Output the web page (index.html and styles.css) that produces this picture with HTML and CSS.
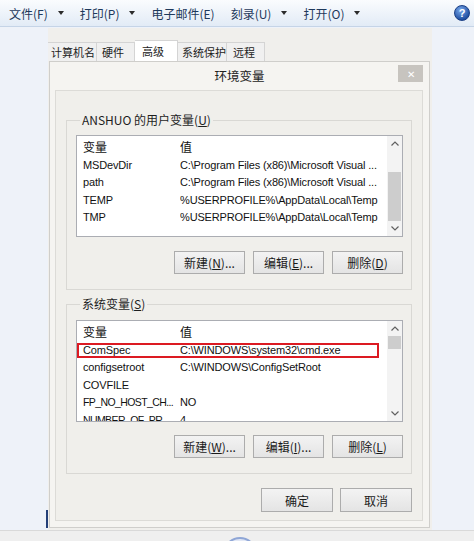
FILE: index.html
```html
<!DOCTYPE html>
<html lang="zh-CN">
<head>
<meta charset="utf-8">
<title>环境变量</title>
<link rel="stylesheet" href="styles.css">
</head>
<body>
<div class="toolbar">
  <div class="menu">
    <span class="mi">文件(F)<i class="dd"></i></span>
    <span class="mi">打印(P)<i class="dd"></i></span>
    <span class="mi">电子邮件(E)</span>
    <span class="mi">刻录(U)<i class="dd"></i></span>
    <span class="mi">打开(O)<i class="dd"></i></span>
  </div>
  <span class="help">?</span>
</div>
<div class="stage">
  <div class="side"><div class="edge"></div></div>
  <div class="window">
    <div class="tabs">
      <span class="tab t1">计算机名</span>
      <span class="tab t2">硬件</span>
      <span class="tab t3 on">高级</span>
      <span class="tab t4">系统保护</span>
      <span class="tab t5">远程</span>
    </div>
    <div class="dialog">
      <div class="titlebar"><span></span><span class="title">环境变量</span><span class="close">✕</span></div>
      <div class="content">
        <fieldset class="group g-user">
          <legend>ANSHUO 的用户变量(<u>U</u>)</legend>
          <div class="list">
            <div class="rows">
              <div class="row head"><span class="c1">变量</span><span class="c2">值</span></div>
              <div class="row"><span class="c1">MSDevDir</span><span class="c2">C:\Program Files (x86)\Microsoft Visual ...</span></div>
              <div class="row"><span class="c1">path</span><span class="c2">C:\Program Files (x86)\Microsoft Visual ...</span></div>
              <div class="row"><span class="c1">TEMP</span><span class="c2">%USERPROFILE%\AppData\Local\Temp</span></div>
              <div class="row"><span class="c1">TMP</span><span class="c2">%USERPROFILE%\AppData\Local\Temp</span></div>
            </div>
            <div class="sb">
              <span class="arr"><svg width="8" height="5" viewBox="0 0 8 5"><polyline points="0.5,4.5 4,1 7.5,4.5" fill="none" stroke="#606060" stroke-width="1.2"/></svg></span>
              <span class="track"><span class="thumb thumb-user"></span></span>
              <span class="arr"><svg width="8" height="5" viewBox="0 0 8 5"><polyline points="0.5,0.5 4,4 7.5,0.5" fill="none" stroke="#606060" stroke-width="1.2"/></svg></span>
            </div>
          </div>
          <div class="btns">
            <button class="btn">新建(<u>N</u>)...</button>
            <button class="btn">编辑(<u>E</u>)...</button>
            <button class="btn">删除(<u>D</u>)</button>
          </div>
        </fieldset>
        <fieldset class="group g-sys">
          <legend>系统变量(<u>S</u>)</legend>
          <div class="list">
            <div class="rows">
              <div class="row head"><span class="c1">变量</span><span class="c2">值</span></div>
              <div class="row marked"><span class="c1">ComSpec</span><span class="c2">C:\WINDOWS\system32\cmd.exe</span></div>
              <div class="row"><span class="c1">configsetroot</span><span class="c2">C:\WINDOWS\ConfigSetRoot</span></div>
              <div class="row"><span class="c1">COVFILE</span><span class="c2"></span></div>
              <div class="row"><span class="c1 tight">FP_NO_HOST_CH...</span><span class="c2">NO</span></div>
              <div class="row"><span class="c1 tight">NUMBER_OF_PR...</span><span class="c2">4</span></div>
            </div>
            <div class="sb">
              <span class="arr"><svg width="8" height="5" viewBox="0 0 8 5"><polyline points="0.5,4.5 4,1 7.5,4.5" fill="none" stroke="#606060" stroke-width="1.2"/></svg></span>
              <span class="track"><span class="thumb thumb-sys"></span></span>
              <span class="arr"><svg width="8" height="5" viewBox="0 0 8 5"><polyline points="0.5,0.5 4,4 7.5,0.5" fill="none" stroke="#606060" stroke-width="1.2"/></svg></span>
            </div>
          </div>
          <div class="btns">
            <button class="btn">新建(<u>W</u>)...</button>
            <button class="btn">编辑(<u>I</u>)...</button>
            <button class="btn">删除(<u>L</u>)</button>
          </div>
        </fieldset>
        <div class="okrow">
          <button class="btn big">确定</button>
          <button class="btn big">取消</button>
        </div>
      </div>
    </div>
  </div>
</div>
<div class="taskbar"><div class="orb"></div></div>
</body>
</html>
```
FILE: styles.css
```css
* { box-sizing: border-box; }

body {
  margin: 0;
  width: 474px;
  height: 541px;
  overflow: hidden;
  background: #eef2f9;
  font-family: "Noto Sans CJK SC", sans-serif;
  font-size: 12px;
  color: #000;
}

/* top command bar */
.toolbar {
  height: 27px;
  display: flex;
  align-items: center;
  justify-content: space-between;
  padding: 0 4px 0 9px;
  background: linear-gradient(#fafcfe, #e2ebf6);
  border-bottom: 1px solid #c5d4e7;
  color: #1e395b;
  font-size: 12px;
}
.menu { display: flex; gap: 16px; }
.mi { display: flex; align-items: center; }
.dd {
  width: 0; height: 0;
  border-left: 3.5px solid transparent;
  border-right: 3.5px solid transparent;
  border-top: 4px solid #2b2b2b;
  margin-left: 10px;
}
.help {
  width: 16px; height: 16px;
  border-radius: 50%;
  background: radial-gradient(circle at 40% 30%, #79a9ec, #1c4c9f 75%);
  border: 1px solid #1a3f86;
  color: #fff;
  font: bold 11px "Liberation Sans", sans-serif;
  display: flex; align-items: center; justify-content: center;
}

/* main stage */
.stage { display: flex; height: 503px; padding-top: 1px; }
.side {
  width: 48px;
  display: flex; flex-direction: column;
  justify-content: flex-end; align-items: flex-end;
  padding-bottom: 2px;
}
.edge { width: 2px; height: 18px; background: #233f78; }

.window {
  width: 384px;
  background: #f0efec;
  display: flex; flex-direction: column;
  padding-top: 13px;
  overflow: hidden;
}
.tabs { display: flex; height: 20px; align-items: flex-end; font-size: 11px; }
.tab {
  height: 19px;
  display: flex; align-items: center;
  border: 1px solid #d4d4d4;
  border-left: none;
  border-bottom: none;
  background: #f0f0f0;
  color: #222;
  white-space: nowrap;
  overflow: hidden;
}
.t1 { width: 49px; padding-left: 3px; }
.t2 { width: 38px; padding-left: 5px; }
.t3 { width: 43px; padding-left: 7px; }
.t4 { width: 49px; padding-left: 4px; }
.t5 { width: 38px; padding-left: 6px; }
.tab.on { height: 21px; background: #fff; align-items: flex-start; padding-top: 2px; }

.dialog {
  flex: 1;
  width: 381px;
  margin: 0 0 2px 1px;
  background: #f5f4f1;
  border: 1px solid #cfcecb;
  display: flex; flex-direction: column;
}
.titlebar {
  height: 28px;
  display: grid;
  grid-template-columns: 1fr auto 1fr;
}
.title { font-size: 12.5px; line-height: 28px; color: #222; }
.close {
  justify-self: end;
  margin: 3px 6px 0 0;
  width: 25px; height: 17px;
  background: #c7c4bf;
  color: #fff;
  font-size: 10px;
  display: flex; align-items: center; justify-content: center;
}

.content {
  flex: 1;
  margin: 0 6px 6px 5px;
  background: #f0efeb;
  border: 1px solid #dcdbd7;
  display: flex; flex-direction: column;
}

.group {
  margin: 0 10px;
  padding: 7px 8px 15px 9px;
  border: 1px solid #d9d8d4;
  min-inline-size: 0;
}
.g-user { margin-top: 21px; }
.g-sys { margin-top: 6px; padding-top: 8px; }
.group legend {
  padding: 0 2px;
  margin-left: 4px;
  line-height: 16px;
  color: #1e1e1e;
}

.list {
  height: 102px;
  border: 1px solid #abadb3;
  background: #fff;
  display: flex;
}
.rows { flex: 1; overflow: hidden; }
.row {
  height: 17.5px;
  display: flex; align-items: center;
  white-space: nowrap;
  color: #111;
  position: relative;
  font-family: "Liberation Sans", Arial, sans-serif;
  font-size: 11px;
  letter-spacing: -0.15px;
}
.row.head { height: 20px; font-family: "Noto Sans CJK SC", sans-serif; font-size: 12px; letter-spacing: 0; }
.c1 { width: 103px; padding-left: 6px; flex: none; }
.c1.tight { font-size: 10.5px; letter-spacing: -0.6px; }
.c2 { flex: 1; overflow: hidden; }
.row.marked::after {
  content: "";
  position: absolute;
  left: 0; right: 8px; top: 2px; bottom: 1px;
  border: 2px solid #dc1a22;
}

.sb {
  width: 15px;
  display: flex; flex-direction: column;
  background: #f3f3f3;
}
.arr { height: 15px; display: flex; align-items: center; justify-content: center; flex: none; }
.track { flex: 1; display: flex; flex-direction: column; padding: 0 1px; }
.thumb { background: #cdcdcd; }
.thumb-user { margin-top: 21px; height: 49px; }
.thumb-sys { height: 13px; }

.btns { display: flex; justify-content: flex-end; gap: 8px; }
.g-user .btns { margin-top: 14px; }
.g-sys .btns { margin-top: 13px; }
.btn {
  width: 71px; height: 23px;
  padding: 0;
  border: 1px solid #acacac;
  background: linear-gradient(#f3f3f3, #e4e4e4);
  font-family: "Noto Sans CJK SC", sans-serif;
  font-size: 12px;
  color: #1a1a1a;
}
.okrow { display: flex; justify-content: flex-end; gap: 7px; margin: 14px 10px 0 0; }
.btn.big { width: 72px; height: 24px; }

.taskbar {
  height: 11px;
  background: #efefef;
  border-top: 1px solid #d9d9d9;
  overflow: hidden;
}
.orb {
  width: 34px; height: 34px;
  margin: 6px 0 0 223px;
  border-radius: 50%;
  border: 2px solid #8fa6d6;
  background: #e2e8f6;
}
```
